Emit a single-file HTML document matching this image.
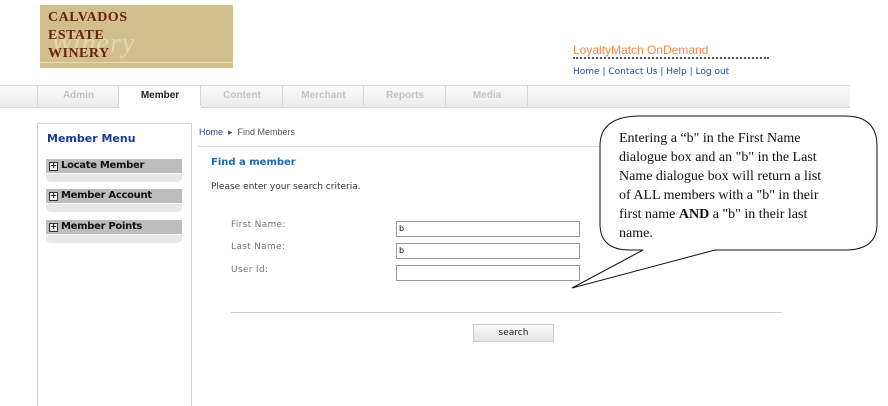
<!DOCTYPE html>
<html><head><meta charset="utf-8"><style>
html,body{margin:0;width:888px;height:406px;overflow:hidden}
body{position:relative;background:#fff;font-family:Verdana,"DejaVu Sans",sans-serif}
.a{position:absolute}
.tab{position:absolute;top:86px;height:20px;font:bold 10px "Liberation Sans",sans-serif;color:#c4c4c4;text-align:center;line-height:20px;border-left:1px solid #d6d6d6}
.mh{position:absolute;left:46px;width:136px;height:14px;background:#bdbdbd;font:bold 10px "DejaVu Sans",sans-serif;line-height:14px;color:#111;letter-spacing:-0.3px}
.mh span{display:inline-block;width:7px;height:7px;border:1px solid #333;font-size:8px;line-height:6px;text-align:center;margin:0 3px 0 3px;background:#eee;vertical-align:0px}
.ms{position:absolute;left:46px;width:136px;height:8px;background:#e8e8e8;border-radius:0 0 5px 5px}
.lbl{position:absolute;left:231px;font-size:9px;color:#777;letter-spacing:0.3px}
.inp{position:absolute;left:396px;width:180px;height:14px;border:1px solid #999;font-size:8px;line-height:14px;padding-left:2px;box-sizing:content-box}
</style></head><body>
<div class="a" style="left:40px;top:5px;width:193px;height:63px;background:#d2c08c"></div>
<div class="a" style="left:40px;top:62px;width:193px;height:1px;background:#e8dcb8"></div>
<div class="a" style="left:50px;top:28px;font:italic 28px 'Liberation Serif',serif;color:#e2d5b0;letter-spacing:1px">Winery</div>
<div class="a" style="left:48px;top:9px;font:bold 14px/18px 'Liberation Serif',serif;color:#6a2210;letter-spacing:0.5px">CALVADOS<br>ESTATE<br>WINERY</div>
<div class="a" style="left:573px;top:43px;font:12px 'Liberation Sans',sans-serif;color:#f08a48">LoyaltyMatch OnDemand</div>
<div class="a" style="left:573px;top:57px;width:196px;border-top:2px dotted #555"></div>
<div class="a" style="left:573px;top:67px;font-size:9px;color:#23508c">Home | Contact Us | Help | Log out</div>
<div class="a" style="left:0;top:85px;width:850px;height:21px;background:linear-gradient(#fafafa,#ececec);border-top:1px solid #d6d6d6;border-bottom:1px solid #d6d6d6"></div>
<div class="tab" style="left:37px;width:81px">Admin</div>
<div class="tab" style="left:118px;width:82px;background:#fff;color:#222;height:22px">Member</div>
<div class="tab" style="left:200px;width:82px">Content</div>
<div class="tab" style="left:282px;width:81px">Merchant</div>
<div class="tab" style="left:363px;width:82px">Reports</div>
<div class="tab" style="left:445px;width:82px">Media</div>
<div class="tab" style="left:527px;width:1px"></div>
<div class="a" style="left:37px;top:123px;width:153px;height:300px;border:1px solid #d6d6d6"></div>
<div class="a" style="left:47px;top:132px;font:bold 11px 'DejaVu Sans',sans-serif;color:#1a3a9a">Member Menu</div>
<div class="mh" style="top:159px"><span>+</span>Locate Member</div><div class="ms" style="top:174px"></div>
<div class="mh" style="top:189px"><span>+</span>Member Account</div><div class="ms" style="top:204px"></div>
<div class="mh" style="top:220px"><span>+</span>Member Points</div><div class="ms" style="top:235px"></div>
<div class="a" style="left:199px;top:127px;font:9px 'Liberation Sans',sans-serif;color:#555"><span style="color:#23508c">Home</span> &nbsp;▸&nbsp; Find Members</div>
<div class="a" style="left:198px;top:146px;width:420px;height:1px;background:#d6d6d6"></div>
<div class="a" style="left:211px;top:157px;font:bold 10px 'DejaVu Sans',sans-serif;color:#1a6aaa">Find a member</div>
<div class="a" style="left:211px;top:182px;font-size:9px;color:#333">Please enter your search criteria.</div>
<div class="lbl" style="top:220px">First Name:</div>
<div class="lbl" style="top:242px">Last Name:</div>
<div class="lbl" style="top:265px">User Id:</div>
<div class="inp" style="top:221px">b</div>
<div class="inp" style="top:243px">b</div>
<div class="inp" style="top:265px"></div>
<div class="a" style="left:231px;top:312px;width:551px;height:1px;background:#d0d0d0"></div>
<div class="a" style="left:473px;top:324px;width:79px;height:16px;border:1px solid #ccc;background:linear-gradient(#fafafa,#e4e4e4);font-size:9px;text-align:center;line-height:16px;color:#222">search</div>
<svg class="a" style="left:0;top:0" width="888" height="406"><path d="M640,116 H845 Q877,116 877,146 V224 Q877,250 845,250 H715 L572,288 L643,250 H630 Q600,250 600,224 V146 Q600,116 640,116 Z" fill="#fff" stroke="#111" stroke-width="1"/></svg>
<div class="a" style="left:619px;top:129px;font:14px/19px 'Liberation Serif',serif;color:#111;white-space:nowrap">Entering a “b" in the First Name<br>dialogue box and an "b" in the Last<br>Name dialogue box will return a list<br>of ALL members with a "b" in their<br>first name <b>AND</b> a "b" in their last<br>name.</div>
</body></html>
